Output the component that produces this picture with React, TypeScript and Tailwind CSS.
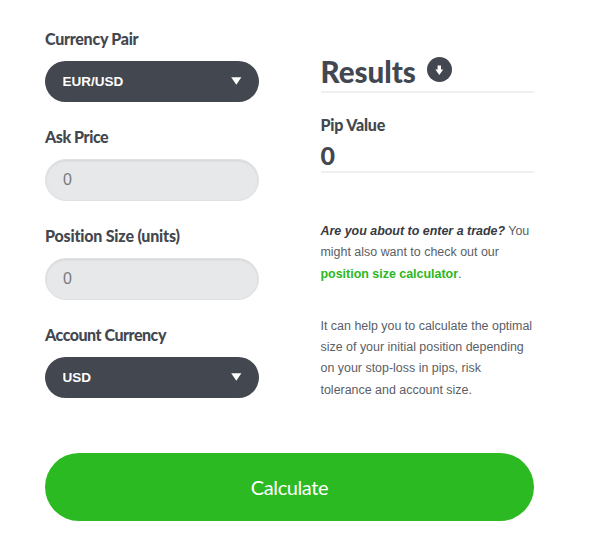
import { useState } from "react"

const pairs = ["EUR/USD", "GBP/USD", "USD/JPY", "USD/CHF"]
const currencies = ["USD", "EUR", "GBP", "JPY"]

function Label({ id, text, spacing }: { id: string; text: string; spacing: string }) {
  return (
    <label
      htmlFor={id}
      className={`block h-8 whitespace-nowrap font-['Lato'] text-[16px] font-black leading-[19px] ${spacing}`}
    >
      {text}
    </label>
  )
}

function Select({ id, options }: { id: string; options: string[] }) {
  return (
    <div className="relative h-[41px]">
      <select
        id={id}
        className="block h-full w-full appearance-none rounded-full bg-[#43474f] pl-[17.5px] pr-10 pt-0.5 text-[13.5px] font-bold text-white outline-none"
      >
        {options.map((o) => (
          <option key={o}>{o}</option>
        ))}
      </select>
      <svg className="pointer-events-none absolute right-[17px] top-4 h-2 w-[11px]" viewBox="0 0 11 8" fill="#fff">
        <path d="M0.2 0.2H10.4L5.3 7.8Z" />
      </svg>
    </div>
  )
}

function NumberField({ id }: { id: string }) {
  const [value, setValue] = useState("")

  return (
    <input
      id={id}
      value={value}
      onChange={(e) => setValue(e.target.value)}
      placeholder="0"
      className="block h-[42px] w-full rounded-full border border-[#e0e1e3] bg-[#e7e8ea] px-[17px] text-[16px] shadow-[inset_0_1px_2px_#d2d4d6] outline-none placeholder:text-[#777a80]"
    />
  )
}

export default function App() {
  return (
    <main className="h-[538px] w-[602px] overflow-hidden bg-white pl-[45px] pt-[29px] font-['Liberation_Sans',sans-serif] text-[#43474f]">
      <div className="flex h-[424px] gap-[61.5px]">
        <form className="flex w-[214px] flex-col gap-[25px]">
          <div>
            <Label id="pair" text="Currency Pair" spacing="tracking-[-0.27px]" />
            <Select id="pair" options={pairs} />
          </div>
          <div>
            <Label id="ask" text="Ask Price" spacing="tracking-[-0.43px]" />
            <NumberField id="ask" />
          </div>
          <div>
            <Label id="size" text="Position Size (units)" spacing="tracking-[-0.19px]" />
            <NumberField id="size" />
          </div>
          <div>
            <Label id="account" text="Account Currency" spacing="tracking-[-0.48px]" />
            <Select id="account" options={currencies} />
          </div>
        </form>

        <section className="w-[213.5px]">
          <div className="flex h-[64px] items-start border-b-2 border-[#f0f0f2] pt-[26px]">
            <h2 className="w-[106.5px] whitespace-nowrap font-['Lato'] text-[29.5px] font-black leading-[34px]">Results</h2>
            <svg className="mt-[2px] h-[25px] w-[25px]" viewBox="0 0 25 25">
              <circle cx="12.5" cy="12.5" r="12.5" fill="#43474f" />
              <path d="M10.6 8.5H14V12.6H16.2L12.3 18L8.4 12.6H10.6Z" fill="#fff" />
            </svg>
          </div>
          <div className="h-[80px] border-b-2 border-[#f0f0f2] pt-[22px]">
            <h3 className="font-['Lato'] text-[16px] font-black leading-[19px] tracking-[-0.2px]">Pip Value</h3>
            <p className="mt-[6px] font-['Lato'] text-[25px] font-black leading-[30px]">0</p>
          </div>

          <p className="mt-[48px] whitespace-nowrap text-[12.45px] leading-[21.3px] text-[#5b5e65]">
            <strong className="italic text-[#373a41]">Are you about to enter a trade?</strong> You
            <br />
            might also want to check out our
            <br />
            <a href="#" className="font-bold text-[#2bb822]">position size calculator</a>.
          </p>
          <p className="mt-[31px] whitespace-nowrap text-[12.45px] leading-[21.3px] text-[#5b5e65]">
            It can help you to calculate the optimal
            <br />
            size of your initial position depending
            <br />
            on your stop-loss in pips, risk
            <br />
            tolerance and account size.
          </p>
        </section>
      </div>

      <button className="block h-[68px] w-[489px] rounded-full bg-[#2bba22] font-['Lato'] text-[20px] tracking-[-0.4px] text-white">
        Calculate
      </button>
    </main>
  )
}
